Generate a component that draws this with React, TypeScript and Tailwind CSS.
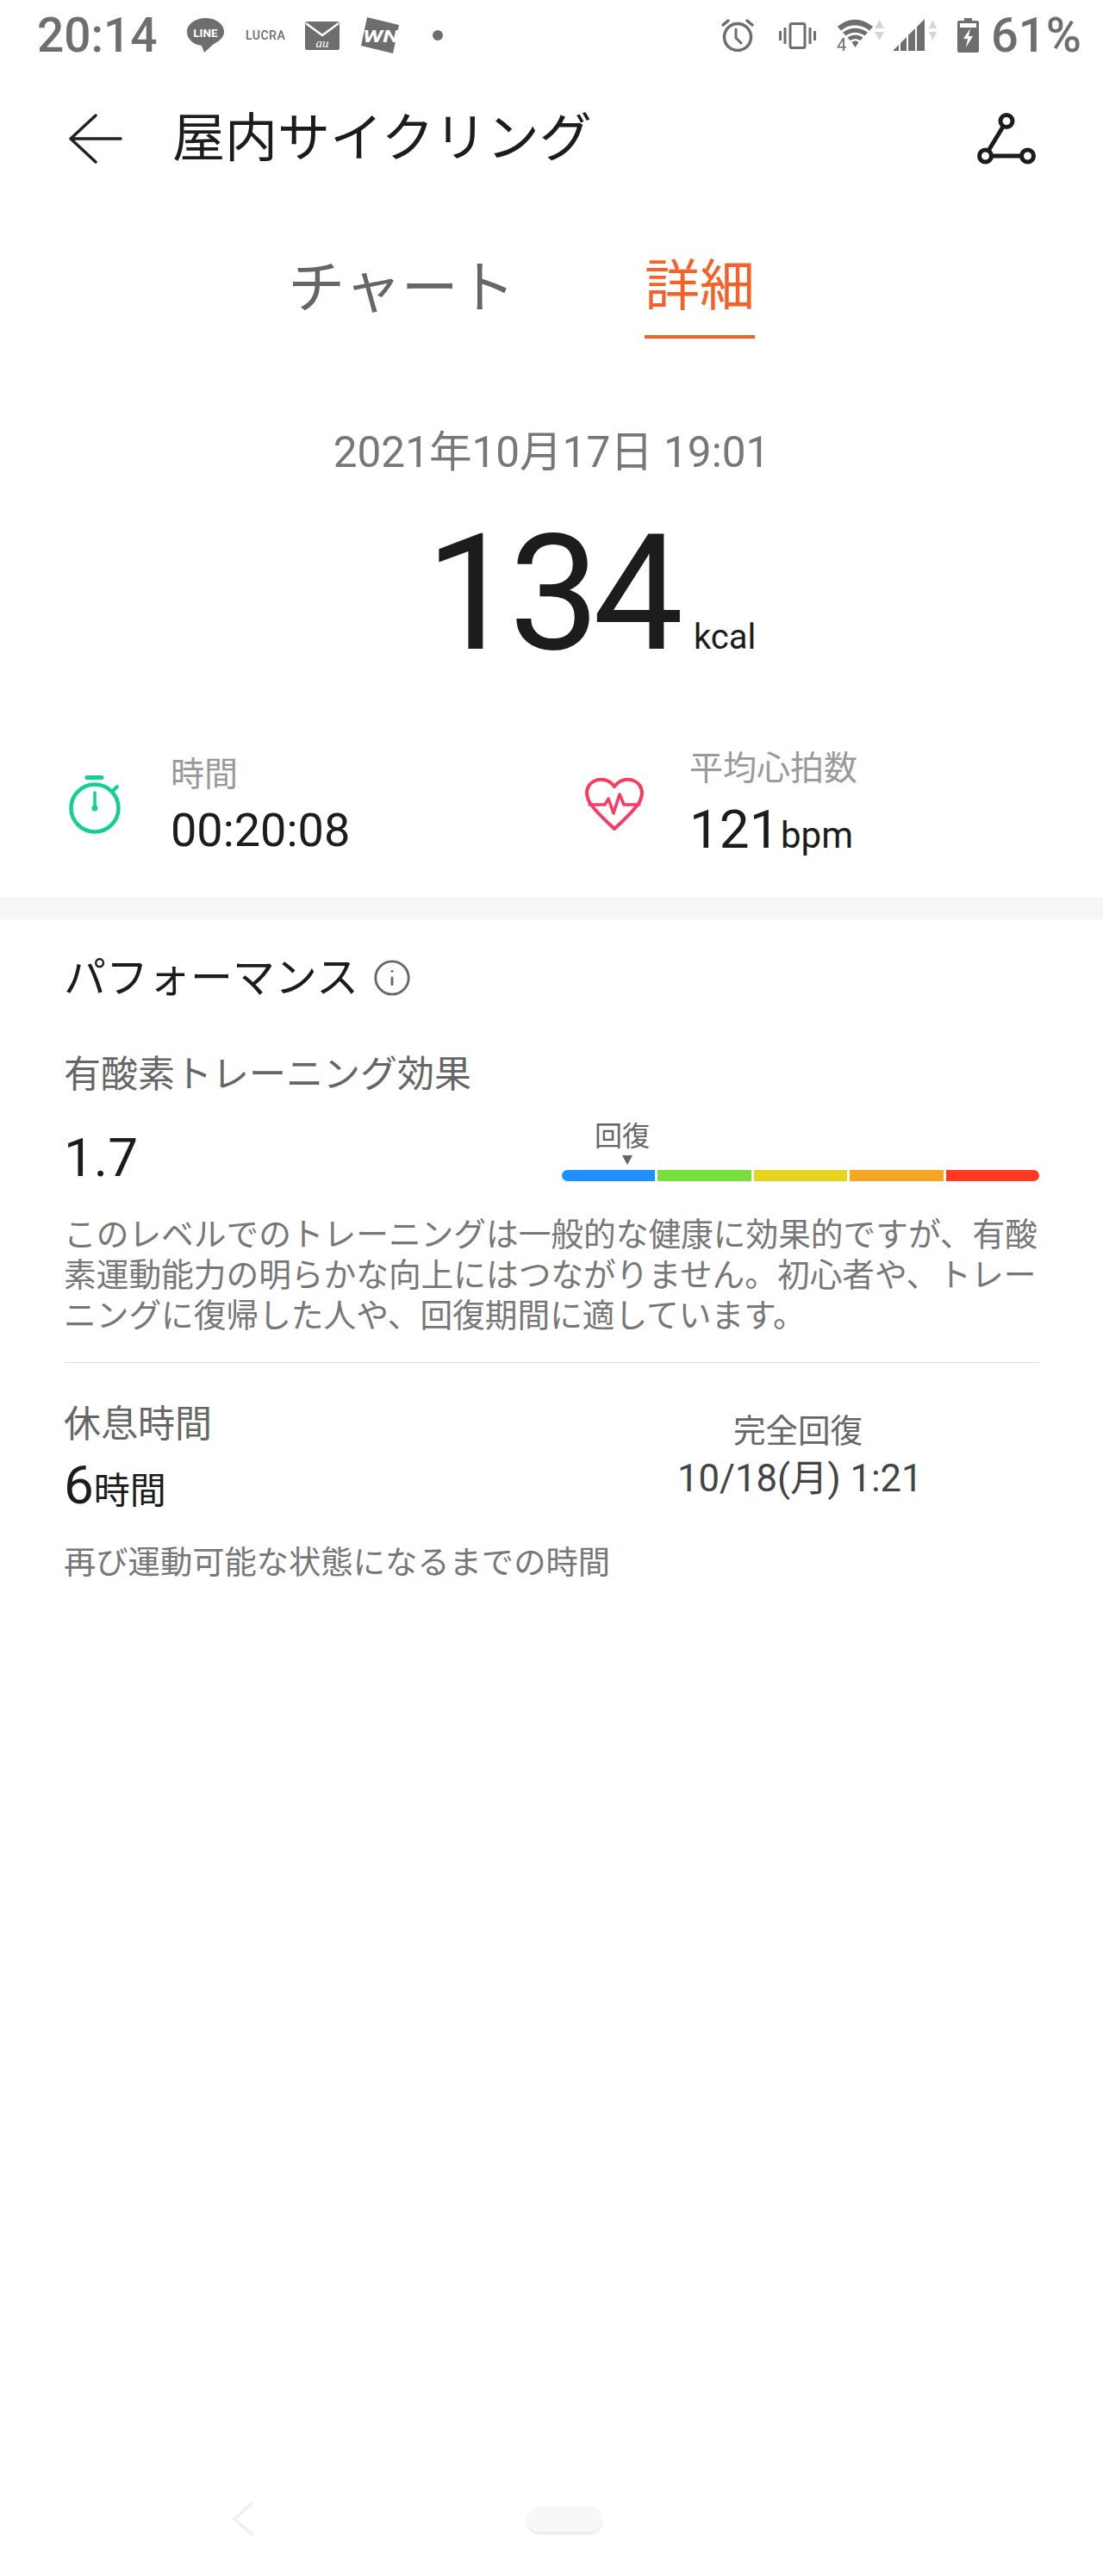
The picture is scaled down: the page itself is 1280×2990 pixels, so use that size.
import { Info } from "lucide-react";

const GRAY = "#6e6e6e";

function LineIcon() {
  return (
    <svg width="43" height="40" viewBox="0 0 43 40">
      <path d="M21.5 0C9.600 0 0 7 0 16c0 8.500 7.500 15 17 16l3 8 11-10C38 26.500 43 22 43 16 43 7 33.400 0 21.500 0Z" fill={GRAY} />
      <text x="21.500" y="21.500" textAnchor="middle" fontSize="13.500" fontWeight="700" fill="#fff" fontFamily="Roboto">LINE</text>
    </svg>
  );
}

function MailIcon() {
  return (
    <svg width="40" height="33" viewBox="0 0 40 33">
      <rect width="40" height="33" rx="2.500" fill={GRAY} />
      <path d="M1 2l19 14L39 2" fill="none" stroke="#fff" strokeWidth="2.500" />
      <text x="20" y="29.500" textAnchor="middle" fontSize="15" fontStyle="italic" fill="#fff" fontFamily="Liberation Serif">au</text>
    </svg>
  );
}

function WnIcon() {
  return (
    <svg width="44" height="42" viewBox="0 0 44 42">
      <path d="M7 0 44 9 37 42 0 33Z" fill={GRAY} />
      <text x="23" y="29" textAnchor="middle" fontSize="20" fontWeight="700" fontStyle="italic" fill="#fff" fontFamily="Roboto" textLength="42" lengthAdjust="spacingAndGlyphs">WN</text>
    </svg>
  );
}

function AlarmIcon() {
  return (
    <svg width="38" height="38" viewBox="0 0 38 38" fill="none" stroke={GRAY} strokeWidth="3.500" strokeLinecap="round" strokeLinejoin="round">
      <circle cx="19" cy="21" r="15.500" />
      <path d="M17 12v10l6 6" strokeWidth="3" />
      <path d="M2 7l6-5M36 7l-6-5" />
    </svg>
  );
}

function VibrateIcon() {
  return (
    <svg width="43" height="31" viewBox="0 0 43 31" fill="none" stroke={GRAY}>
      <rect x="13" y="1.500" width="17" height="28" rx="2" strokeWidth="3" />
      <path d="M7 6v19M36 6v19" strokeWidth="3" />
      <path d="M1.500 10v11M41.500 10v11" strokeWidth="3" />
    </svg>
  );
}

function WifiIcon() {
  return (
    <svg width="56" height="38" viewBox="0 0 56 38">
      <path d="M1 9C13-2 29-2 42 9L38 13.500C27 5 15 5 5 13.500Z" fill={GRAY} />
      <path d="M7 15.500C16 9 27 9 36 15.500L32.500 19.500C25 14.500 18 14.500 10.500 19.500Z" fill={GRAY} />
      <path d="M12.500 21.500C19 17.500 24 17.500 30.500 21.500L27.500 25C23 22.500 20 22.500 15.500 25Z" fill={GRAY} />
      <path d="M17.500 27C20.500 25 22.500 25 25.500 27L21.500 33Z" fill={GRAY} />
      <text x="0" y="37" fontSize="20" fill={GRAY} fontFamily="Roboto">4</text>
      <path d="M44 11l5.500-10 5.500 10ZM44 15h11l-5.500 10Z" fill="#d6d6d6" />
    </svg>
  );
}

function SignalIcon() {
  return (
    <svg width="52" height="38" viewBox="0 0 52 38">
      <path d="M0 37 7 30V37ZM9 28 16 21V37H9ZM18 19 26 11V37H18ZM28 9 37 0V37H28Z" fill={GRAY} />
      <path d="M42 11l4.500-10 4.500 10ZM42 15h9l-4.500 10Z" fill="#d6d6d6" />
    </svg>
  );
}

function BatteryIcon() {
  return (
    <svg width="25" height="40" viewBox="0 0 25 40">
      <path d="M8 0h9v3h6a2 2 0 0 1 2 2v33a2 2 0 0 1-2 2H2a2 2 0 0 1-2-2V5a2 2 0 0 1 2-2h6Z" fill={GRAY} />
      <rect x="3" y="6" width="19" height="5" fill="#fff" />
      <path d="M15 12 7 24h5l-2 10 8-13h-5Z" fill="#fff" />
    </svg>
  );
}

function BackArrow() {
  return (
    <svg width="62" height="58" viewBox="0 0 62 58" fill="none" stroke="#222" strokeWidth="3.500" strokeLinecap="round" strokeLinejoin="round">
      <path d="M31 2 2 29l29 27M2 29h58" />
    </svg>
  );
}

function RouteIcon() {
  return (
    <svg width="68" height="60" viewBox="0 0 68 60" fill="none" stroke="#1c1c1c" strokeWidth="5">
      <circle cx="34" cy="9.500" r="7" />
      <circle cx="9.500" cy="50" r="7" />
      <circle cx="58.500" cy="50" r="7" />
      <path d="M30 16 13 44M17 50h34" />
    </svg>
  );
}

function TimerIcon() {
  return (
    <svg width="62" height="68" viewBox="0 0 62 68" fill="none" stroke="#12cf94" strokeLinecap="round">
      <path d="M21 2.500h17" strokeWidth="5" />
      <circle cx="30" cy="38" r="27.500" strokeWidth="4.500" />
      <path d="M30 20v18" strokeWidth="3.500" />
      <circle cx="30" cy="38" r="3.500" fill="#12cf94" stroke="none" />
      <path d="M51 18l5-5" strokeWidth="4" />
    </svg>
  );
}

function HeartIcon() {
  return (
    <svg width="68" height="62" viewBox="0 0 68 62" fill="none" stroke="#fb3a61" strokeWidth="4" strokeLinejoin="round" strokeLinecap="round">
      <path d="M34 10C28 2 19 0 12 3 2 7 0 17 4 26c4 9 18 22 30 33 12-11 26-24 30-33 4-9 2-19-8-23-7-3-16-1-22 7Z" />
      <path d="M5 31h18l4-7 6 17 7-22 5 12h18" strokeWidth="3.500" />
    </svg>
  );
}

export default function App() {
  return (
    <div className="w-[1280px] h-[2990px] flex flex-col bg-white font-['Roboto','Noto_Sans_CJK_JP',sans-serif] text-[#1c1c1c] overflow-hidden">
      {/* status bar */}
      <div className="h-[82px] flex items-center pl-[43px] pr-[26px] text-[#6e6e6e]">
        <span className="w-[174px] text-[55px] leading-none font-medium">20:14</span>
        <LineIcon />
        <span className="ml-[25px] text-[14px] font-medium tracking-[0.5px] w-[44px]">LUCRA</span>
        <span className="ml-[25px]"><MailIcon /></span>
        <span className="ml-[25px]"><WnIcon /></span>
        <span className="ml-[39px] w-3 h-3 rounded-full bg-[#6e6e6e]" />
        <div className="ml-auto flex items-center">
          <AlarmIcon />
          <span className="ml-[29px]"><VibrateIcon /></span>
          <span className="ml-[24px]"><WifiIcon /></span>
          <span className="ml-[9px]"><SignalIcon /></span>
          <span className="ml-[23px]"><BatteryIcon /></span>
          <span className="ml-[14px] w-[104px] text-[56px] leading-none font-medium whitespace-nowrap">61%</span>
        </div>
      </div>

      {/* header */}
      <div className="h-[158px] flex items-center pl-[80px] pr-[78px]">
        <BackArrow />
        <h1 className="ml-[58px] text-[61px] font-normal leading-none">屋内サイクリング</h1>
        <span className="ml-auto"><RouteIcon /></span>
      </div>

      {/* tabs */}
      <div className="mt-[48px] h-[105px] flex gap-[150px] pl-[334px]">
        <button className="h-full w-[264px] text-[66px] leading-none text-[#666] pb-[12px] whitespace-nowrap">チャート</button>
        <button className="h-full w-[128px] text-[64px] leading-none text-[#f4622a] pb-[12px] border-b-4 border-[#f4622a] whitespace-nowrap">詳細</button>
      </div>

      {/* total */}
      <p className="mt-[102px] h-[60px] flex items-center justify-center text-[49.500px] text-[#777]">2021年10月17日 19:01</p>
      <div className="mt-[40px] h-[190px] flex items-baseline justify-center pl-[91px]">
        <span className="text-[187px] leading-[190px] tracking-[-8px]">134</span>
        <span className="ml-[20px] text-[40px] leading-none">kcal</span>
      </div>

      {/* stats */}
      <div className="mt-[76px] h-[146px] flex">
        <div className="w-[599px] pl-[80px] flex items-center">
          <TimerIcon />
          <div className="ml-[56px]">
            <p className="text-[39px] leading-[50px] text-[#999]">時間</p>
            <p className="mt-[9px] text-[54px] leading-[62px]">00:20:08</p>
          </div>
        </div>
        <div className="pl-[80px] flex items-center">
          <HeartIcon />
          <div className="ml-[53px]">
            <p className="text-[39px] leading-[50px] text-[#999]">平均心拍数</p>
            <p className="mt-[14px] flex items-baseline leading-[64px]">
              <span className="w-[106px] text-[62px]">121</span>
              <span className="text-[42px]">bpm</span>
            </p>
          </div>
        </div>
      </div>

      <div className="mt-[34px] h-[26px] bg-[#f6f6f6]" />

      {/* performance */}
      <div className="px-[74px] flex flex-col">
        <div className="mt-[43px] flex items-center h-[50px]">
          <h2 className="text-[49px] leading-none font-normal">パフォーマンス</h2>
          <Info className="ml-[16px] w-[46px] h-[46px] text-[#666]" strokeWidth={1.5} />
        </div>

        <p className="mt-[62px] text-[43px] leading-[50px] text-[#666]">有酸素トレーニング効果</p>

        <div className="mt-[28px] h-[88px] flex justify-between items-end">
          <span className="text-[62px] leading-[88px]">1.7</span>
          <div className="w-[554px] mb-[17px]">
            <span className="block ml-[38px] text-[32px] leading-[38px] text-[#666]">回復</span>
            <span className="block ml-[70px] mt-[3px] w-0 h-0 border-x-[6px] border-x-transparent border-t-[11px] border-t-[#666]" />
            <div className="mt-[6px] flex gap-[3px] h-[13px]">
              <span className="flex-1 bg-[#1f8ffb] rounded-l-full" />
              <span className="flex-1 bg-[#78e03c]" />
              <span className="flex-1 bg-[#e6d41e]" />
              <span className="flex-1 bg-[#f5a623]" />
              <span className="flex-1 bg-[#ff3a1f] rounded-r-full" />
            </div>
          </div>
        </div>

        <p className="mt-[22px] w-[1140px] text-[37.700px] leading-[47px] text-[#777]">
          このレベルでのトレーニングは一般的な健康に効果的ですが、有酸素運動能力の明らかな向上にはつながりません。初心者や、トレーニングに復帰した人や、回復期間に適しています。
        </p>

        <div className="mt-[30px] h-px bg-[#dcdcdc]" />

        <div className="mt-[46px] flex">
          <div className="w-[712px]">
            <p className="text-[43px] leading-[50px] text-[#666]">休息時間</p>
            <p className="mt-[16px] flex items-baseline leading-[60px]">
              <span className="text-[62px]">6</span>
              <span className="text-[42px]">時間</span>
            </p>
          </div>
          <div className="w-[280px] pt-[10px] text-center">
            <p className="text-[37.500px] leading-[46px] text-[#666]">完全回復</p>
            <p className="mt-[6px] text-[43.600px] leading-[54px] text-[#444] whitespace-nowrap">10/18(月) 1:21</p>
          </div>
        </div>

        <p className="mt-[30px] text-[37.300px] leading-[46px] text-[#777]">再び運動可能な状態になるまでの時間</p>
      </div>

      {/* nav bar */}
      <div className="mt-auto h-[82px] mb-[25px] flex items-center pl-[269px]">
        <svg width="26" height="40" viewBox="0 0 26 40" fill="none" stroke="#f0f0f0" strokeWidth="3.500">
          <path d="M24 1 3 20l22 19" />
        </svg>
        <span className="ml-[316px] w-[88px] h-[30px] rounded-[15px] bg-[#f8f8f8] shadow-[0_3px_2px_#ececec]" />
      </div>
    </div>
  );
}
